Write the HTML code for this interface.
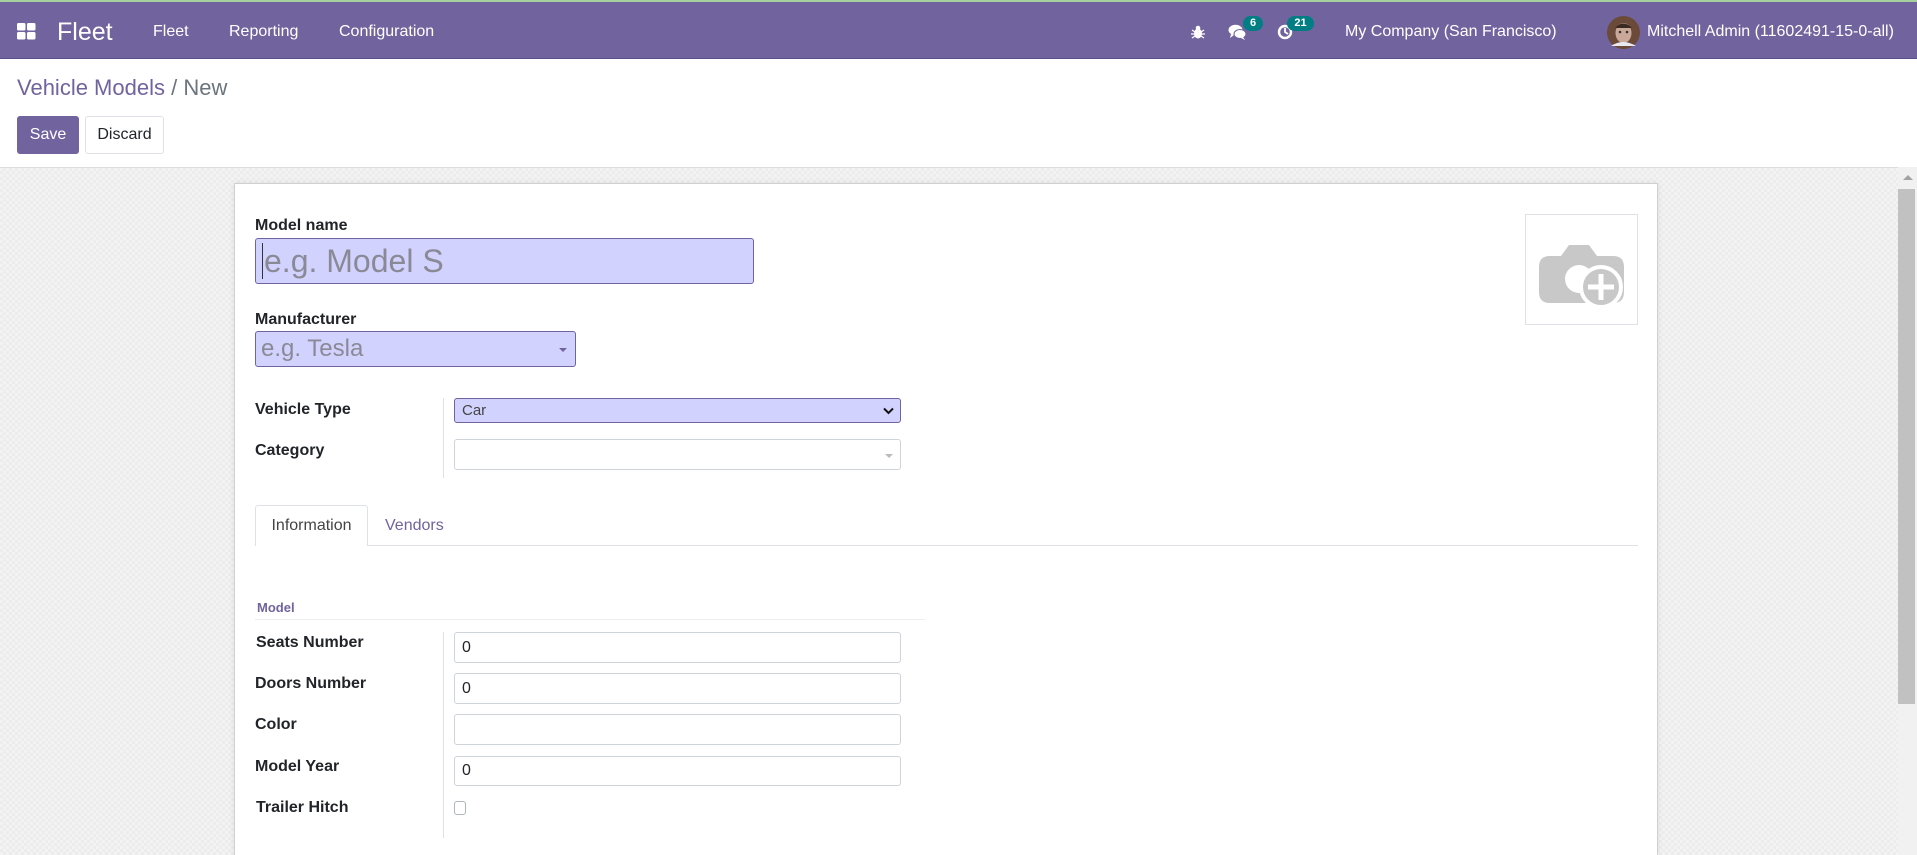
<!DOCTYPE html>
<html style="height:855px;overflow:hidden"><head><meta charset="utf-8"><style>
*{box-sizing:border-box;margin:0;padding:0}
body{width:1917px;height:855px;overflow:hidden;font-family:"Liberation Sans",Arial,sans-serif;background:#fff;position:relative;color:#212529}
.abs{position:absolute}
#nav{left:0;top:0;width:1917px;height:59px;background:#71639e;border-top:2px solid #a6cfa0;border-bottom:1px solid #5b4f85;color:#fff}
#nav .t{position:absolute;top:1px;line-height:58px;font-size:16px;color:#fff;white-space:nowrap}
.badge{position:absolute;background:#017e84;color:#fff;font-size:11px;font-weight:bold;border-radius:9px;height:15px;line-height:15px;text-align:center}
#bg{left:0;top:167px;width:1898px;height:688px;border-top:1px solid #dcdcdc;background-color:#f3f3f3;background-image:linear-gradient(45deg,#ececec 25%,transparent 25%,transparent 75%,#ececec 75%),linear-gradient(45deg,#ececec 25%,transparent 25%,transparent 75%,#ececec 75%);background-size:6px 6px;background-position:0 0,3px 3px}
#sheet{left:234px;top:183px;width:1424px;height:672px;background:#fff;border:1px solid #d0d0d0;border-bottom:none;box-shadow:0 0 6px rgba(0,0,0,.08)}
.lbl{position:absolute;font-weight:bold;font-size:16px;color:#212529;white-space:nowrap;line-height:18px}
.inp{position:absolute;border:1px solid #ced4da;border-radius:3px;background:#fff;font-size:16px;padding-left:7px;color:#212529}
.hl{background:#d2d2ff;border:1px solid #71639e}
.vdiv{position:absolute;width:1px;background:#dee2e6;left:443px}
</style></head><body>
<div id="nav" class="abs">
 <svg class="abs" style="left:17px;top:21px" width="19" height="17" viewBox="0 0 19 17"><rect x="0" y="0" width="8.5" height="7.5" rx="1.5" fill="#fff"/><rect x="10" y="0" width="8.5" height="7.5" rx="1.5" fill="#fff"/><rect x="0" y="9" width="8.5" height="7.5" rx="1.5" fill="#fff"/><rect x="10" y="9" width="8.5" height="7.5" rx="1.5" fill="#fff"/></svg>
 <div class="t" style="left:57px;font-size:25px">Fleet</div>
 <div class="t" style="left:153px">Fleet</div>
 <div class="t" style="left:229px">Reporting</div>
 <div class="t" style="left:339px">Configuration</div>
 <svg class="abs" style="left:1191px;top:23px" width="14" height="14" viewBox="0 0 14 14"><ellipse cx="7" cy="8.5" rx="4" ry="5" fill="#fff"/><circle cx="7" cy="3" r="2.3" fill="#fff"/><path d="M1 5l3 2M13 5l-3 2M0 9h3M14 9h-3M1 13l3-2M13 13l-3-2" stroke="#fff" stroke-width="1.3"/></svg>
 <svg class="abs" style="left:1228px;top:22px" width="20" height="17" viewBox="0 0 20 17"><ellipse cx="7.5" cy="6" rx="7" ry="5.2" fill="#fff"/><path d="M3 10l-1 4 4-3z" fill="#fff"/><ellipse cx="12" cy="10" rx="6" ry="4.5" fill="#fff" stroke="#71639e" stroke-width="1"/><path d="M15 13l2 3-4-2z" fill="#fff"/></svg>
 <div class="badge" style="left:1243px;top:14px;width:20px">6</div>
 <svg class="abs" style="left:1277px;top:22px" width="16" height="16" viewBox="0 0 16 16"><circle cx="8" cy="8" r="6" fill="none" stroke="#fff" stroke-width="2.4"/><path d="M8 4v4l3 2" stroke="#fff" stroke-width="1.8" fill="none"/></svg>
 <div class="badge" style="left:1287px;top:14px;width:27px">21</div>
 <div class="t" style="left:1345px">My Company (San Francisco)</div>
 <svg class="abs" style="left:1607px;top:14px" width="33" height="33" viewBox="0 0 33 33"><circle cx="16.5" cy="16.5" r="16.5" fill="#6b4a3a"/><ellipse cx="16.5" cy="17" rx="8" ry="10" fill="#c9a89a"/><path d="M8 12q8-9 17 0" fill="#3b2a22"/><circle cx="13" cy="16" r="1.3" fill="#333"/><circle cx="20" cy="16" r="1.3" fill="#333"/><path d="M4 30q12-8 25 0" fill="#e8e8ee"/></svg>
 <div class="t" style="left:1647px">Mitchell Admin (11602491-15-0-all)</div>
</div>
<div class="abs" style="left:17px;top:75px;font-size:22px;color:#71639e;white-space:nowrap">Vehicle Models <span style="color:#6c757d">/ New</span></div>
<div class="abs" style="left:17px;top:116px;width:62px;height:38px;background:#71639e;border-radius:3px;color:#fff;font-size:16px;line-height:38px;text-align:center">Save</div>
<div class="abs" style="left:85px;top:116px;width:79px;height:38px;background:#fff;border:1px solid #dee2e6;border-radius:3px;color:#212529;font-size:16px;line-height:36px;text-align:center">Discard</div>
<div id="bg" class="abs"></div>
<div class="abs" style="left:1898px;top:167px;width:19px;height:688px;background:#f1f1f1"></div>
<div class="abs" style="left:1903px;top:175px;width:0;height:0;border-left:5px solid transparent;border-right:5px solid transparent;border-bottom:5px solid #a3a3a3"></div>
<div class="abs" style="left:1898px;top:189px;width:17px;height:515px;background:#c1c1c1"></div>
<div id="sheet" class="abs"></div>

<div class="lbl" style="left:255px;top:217px">Model name</div>
<div class="inp hl" style="left:255px;top:238px;width:499px;height:46px;font-size:32px;line-height:44px;color:#8a8a96;padding-left:6px"><span style="border-left:1px solid #333;margin-right:1px"></span>e.g. Model S</div>
<div class="lbl" style="left:255px;top:311px">Manufacturer</div>
<div class="inp hl" style="left:255px;top:331px;width:321px;height:36px;font-size:24px;line-height:34px;color:#8a8a96;padding-left:5px">e.g. Tesla<span class="abs" style="right:8px;top:16px;border-left:4px solid transparent;border-right:4px solid transparent;border-top:4px solid #71639e"></span></div>

<div class="vdiv" style="top:398px;height:80px"></div>
<div class="lbl" style="left:255px;top:401px">Vehicle Type</div>
<div class="inp hl" style="left:454px;top:398px;width:447px;height:25px;line-height:23px;font-size:15px;color:#444">Car
 <svg class="abs" style="right:6px;top:8px" width="11" height="8" viewBox="0 0 11 8"><path d="M1 1.5l4.5 4.5 4.5-4.5" stroke="#111" stroke-width="2" fill="none"/></svg></div>
<div class="lbl" style="left:255px;top:442px">Category</div>
<div class="inp" style="left:454px;top:439px;width:447px;height:31px"><span class="abs" style="right:7px;top:14px;border-left:4px solid transparent;border-right:4px solid transparent;border-top:4px solid #bbb"></span></div>

<div class="abs" style="left:1525px;top:214px;width:113px;height:111px;border:1px solid #dee2e6"></div>
<svg class="abs" style="left:1539px;top:234px" width="86" height="76" viewBox="0 0 86 76"><path d="M22 22 L30 11 H50 L58 22 H74 Q85 22 85 33 V58 Q85 69 74 69 H11 Q0 69 0 58 V33 Q0 22 11 22Z" fill="#c8c8c8"/><circle cx="40" cy="45" r="14" fill="#fff"/><circle cx="62" cy="53" r="20" fill="#c8c8c8" stroke="#fff" stroke-width="4"/><path d="M62 40v26M49 53h26" stroke="#fff" stroke-width="5"/></svg>

<div class="abs" style="left:334px;top:545px;width:1304px;height:1px;background:#dee2e6"></div>
<div class="abs" style="left:255px;top:505px;width:113px;height:41px;border:1px solid #dee2e6;border-bottom:none;border-radius:3px 3px 0 0;background:#fff;font-size:16px;line-height:40px;text-align:center;color:#444">Information</div>
<div class="abs" style="left:385px;top:505px;font-size:16px;line-height:42px;color:#71639e">Vendors</div>

<div class="abs" style="left:257px;top:600px;font-size:13px;font-weight:bold;color:#71639e">Model</div>
<div class="abs" style="left:255px;top:619px;width:670px;height:1px;background:#eee"></div>
<div class="vdiv" style="top:632px;height:206px"></div>
<div class="lbl" style="left:256px;top:634px">Seats Number</div>
<div class="inp" style="left:454px;top:632px;width:447px;height:31px;line-height:29px">0</div>
<div class="lbl" style="left:255px;top:675px">Doors Number</div>
<div class="inp" style="left:454px;top:673px;width:447px;height:31px;line-height:29px">0</div>
<div class="lbl" style="left:255px;top:716px">Color</div>
<div class="inp" style="left:454px;top:714px;width:447px;height:31px"></div>
<div class="lbl" style="left:255px;top:758px">Model Year</div>
<div class="inp" style="left:454px;top:756px;width:447px;height:30px;line-height:28px">0</div>
<div class="lbl" style="left:256px;top:799px">Trailer Hitch</div>
<div class="abs" style="left:454px;top:801px;width:12px;height:14px;border:1px solid #adb5bd;border-radius:3px;background:#fff"></div>
</body></html>
